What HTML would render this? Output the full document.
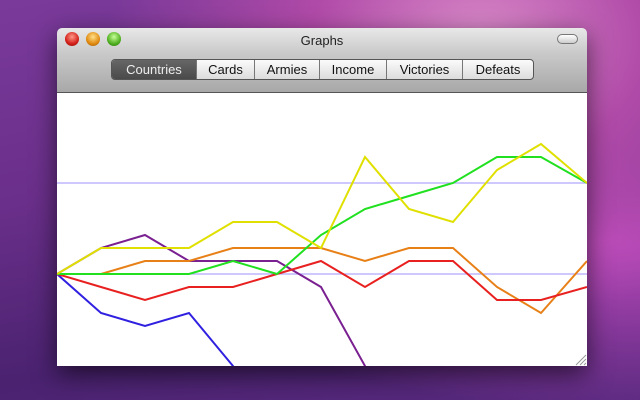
<!DOCTYPE html>
<html><head><style>
body{margin:0;width:640px;height:400px;overflow:hidden;position:relative;font-family:"Liberation Sans",sans-serif;
background:radial-gradient(ellipse at 75% 10%,#d98ac8 0%,#b04aa8 25%,transparent 55%),radial-gradient(ellipse at 95% 60%,#c04cc0 0%,transparent 50%),linear-gradient(170deg,#7a3a9a 0%,#6a2f8a 40%,#4a2270 75%,#5a2a80 100%);}
.win{position:absolute;left:57px;top:28px;width:530px;height:338px;box-shadow:0 8px 25px rgba(0,0,0,.6);border-radius:5px 5px 0 0;overflow:hidden}
.tb{height:64px;background:linear-gradient(#e8e8e8,#c9c9c9 40%,#a8a8a8);border-bottom:1px solid #555;position:relative}
.title{position:absolute;top:5px;width:100%;text-align:center;font-size:13px;color:#222}
.lt{position:absolute;top:4px;width:14px;height:14px;border-radius:50%}
.seg{position:absolute;left:54px;top:31px;height:19px;display:flex;border:1px solid #555;border-radius:4px;overflow:hidden;background:linear-gradient(#fbfbfb,#dcdcdc)}
.seg div{font-size:13px;line-height:19px;text-align:center;color:#111;border-left:1px solid #777;box-sizing:border-box}
.seg div:first-child{border:none;background:linear-gradient(#666,#4a4a4a);color:#eee}
.pill{position:absolute;right:9px;top:6px;width:19px;height:8px;border:1px solid #777;border-radius:5px;background:linear-gradient(#fff,#ccc)}
.c{position:absolute;top:65px;left:0;width:530px;height:273px;background:#fff}
</style></head><body>
<div class="win">
<div class="tb">
<div class="lt" style="left:8px;background:radial-gradient(circle at 50% 35%,#ff9a8a,#d3201a 60%,#8a100c)"></div>
<div class="lt" style="left:29px;background:radial-gradient(circle at 50% 35%,#ffe08a,#e08a10 60%,#9a5a08)"></div>
<div class="lt" style="left:50px;background:radial-gradient(circle at 50% 35%,#c8ff9a,#50b020 60%,#2a7010)"></div>
<div class="title">Graphs</div>
<div class="pill"></div>
<div class="seg">
<div style="width:84px">Countries</div><div style="width:58px">Cards</div><div style="width:65px">Armies</div><div style="width:67px">Income</div><div style="width:76px">Victories</div><div style="width:71px">Defeats</div>
</div>
</div>
<div class="c"></div>
</div>
<svg width="640" height="400" style="position:absolute;left:0;top:0">
<defs><clipPath id="k"><rect x="57" y="93" width="530" height="273"/></clipPath></defs>
<g clip-path="url(#k)" fill="none" stroke-width="2" stroke-linejoin="miter">
<line x1="57" y1="183" x2="587" y2="183" stroke="#b0a8ff" stroke-width="1.3"/>
<line x1="57" y1="274" x2="587" y2="274" stroke="#b0a8ff" stroke-width="1.3"/>
<polyline stroke="#3020e0" points="57,274 101,313 145,326 189,313 233,366 240,380"/>
<polyline stroke="#7a2090" points="57,274 101,248 145,235 189,261 233,261 277,261 321,287 365,366 370,380"/>
<polyline stroke="#e88018" points="57,274 101,274 145,261 189,261 233,248 277,248 321,248 365,261 409,248 453,248 497,287 541,313 587,261"/>
<polyline stroke="#e82020" points="57,274 101,287 145,300 189,287 233,287 277,274 321,261 365,287 409,261 453,261 497,300 541,300 587,287"/>
<polyline stroke="#20e020" points="57,274 101,274 145,274 189,274 233,261 277,274 321,235 365,209 409,196 453,183 497,157 541,157 587,183"/>
<polyline stroke="#e0e000" points="57,274 101,248 145,248 189,248 233,222 277,222 321,248 365,157 409,209 453,222 497,170 541,144 587,183"/>
</g>
<g stroke="#999" stroke-width="1"><line x1="576" y1="365" x2="586" y2="355"/><line x1="580" y1="365" x2="586" y2="359"/><line x1="584" y1="365" x2="586" y2="363"/></g>
</svg>
</body></html>
